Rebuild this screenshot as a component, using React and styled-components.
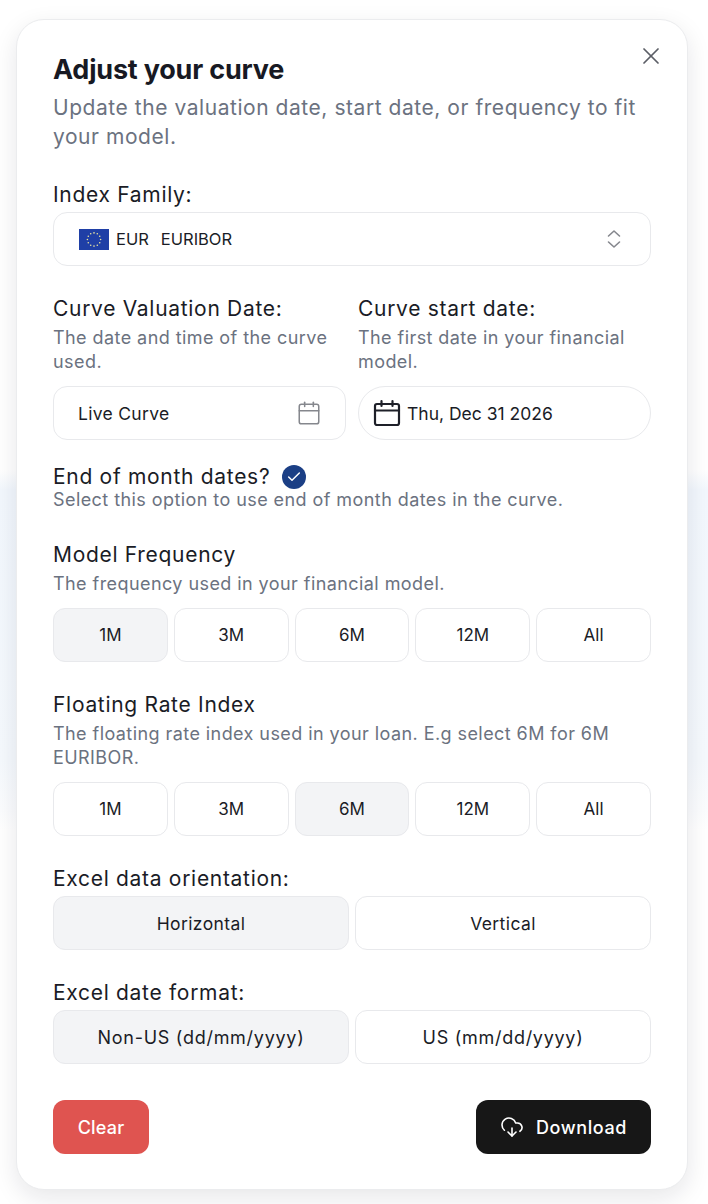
import React from "react";
import styled, { createGlobalStyle } from "styled-components";
import { X, Calendar, CloudDownload, Check } from "lucide-react";

const Global = createGlobalStyle`
  html, body { margin: 0; padding: 0; background: #fff; }
  * { box-sizing: border-box; }
  body { font-family: Inter, "Noto Sans", sans-serif; color: #1a1c26; }
`;
const Page = styled.div`
  width: 708px; height: 1204px; overflow: hidden; padding: 19px 20px 0 16px;
  background:
    linear-gradient(180deg, rgba(255,255,255,0) 0, rgba(255,255,255,0) 470px, #f2f7fd 490px, #f5f9fd 760px, #fbfcfe 810px, #fff 830px);
`;
const Card = styled.div`
  position: relative; width: 672px; padding: 34px 36px 35px;
  background: #fff; border: 1px solid #ebecee; border-radius: 28px;
  box-shadow: 0 8px 24px rgba(20, 24, 40, .1);
  display: flex; flex-direction: column;
`;
const Close = styled.button`
  position: absolute; top: 22px; right: 22px; width: 28px; height: 28px; padding: 0;
  border: 0; background: none; color: #5b5e66; display: flex;
`;
const Title = styled.h1`
  margin: 0; font-size: 27px; line-height: 32px; font-weight: 700; letter-spacing: -.2px; color: #171923;
`;
const Sub = styled.p`
  margin: 7px 0 0; font-size: 21px; line-height: 29px; color: #6b7280; letter-spacing: .55px;
`;
const Label = styled.div`
  margin-top: ${p => p.$mt ?? 31}px; font-size: 21px; line-height: 24px; color: #1a1c26; letter-spacing: .7px;
`;
const Desc = styled.div`
  margin-top: ${p => p.$mt ?? 5}px; font-size: 18px; line-height: ${p => p.$lh ?? 24}px; color: #6b7280; letter-spacing: .43px;
`;
const Select = styled.div`
  margin-top: 5px; height: 54px; display: flex; align-items: center; padding: 0 25px;
  border: 1px solid #e8e9ec; border-radius: 14px; font-size: 16.500px; color: #1a1c26;
`;
const FlagBox = styled.svg`
  width: 30px; height: 21px; margin-right: 7px; flex: none;
`;
const Code = styled.span`
  margin-right: 12px;
`;
const Chevrons = styled.svg`
  width: 18px; height: 22px; margin-left: auto; margin-right: 2px; color: #85878d;
`;
const Cols = styled.div`
  display: grid; grid-template-columns: 1fr 1fr; gap: 12px; margin-top: 31px;
`;
const Col = styled.div`
  display: flex; flex-direction: column;
`;
const DateField = styled.div`
  margin-top: 12px; height: 54px; display: flex; align-items: center;
  border: 1px solid #e8e9ec; border-radius: ${p => p.$round ? "27px" : "14px"};
  padding: 0 ${p => p.$round ? "14px" : "24px"}; font-size: 17.500px; color: #1a1c26;
  letter-spacing: ${p => p.$round ? 0 : .3}px;
  justify-content: ${p => p.$round ? "flex-start" : "space-between"};
  gap: 6px;
`;
const Cal = styled(Calendar)`
  color: #85878d; margin-right: -1px;
`;
const DarkCal = styled.svg`
  width: 28px; height: 28px; flex: none; color: #1e2029;
`;
const CheckRow = styled.div`
  margin-top: 25px; display: flex; align-items: center; gap: 12px;
  font-size: 21px; line-height: 24px; letter-spacing: .7px; color: #1a1c26;
`;
const CheckDot = styled.span`
  width: 24px; height: 24px; border-radius: 50%; background: #1b3f85; color: #fff;
  display: flex; align-items: center; justify-content: center;
`;
const Options = styled.div`
  margin-top: ${p => p.$mt ?? 12}px; display: grid; gap: 6px;
  grid-template-columns: repeat(${p => p.$cols}, 1fr);
`;
const Option = styled.div`
  height: 54px; display: flex; align-items: center; justify-content: center;
  border: 1px solid #e8e9ec; border-radius: 12px; color: #1a1c26;
  font-size: ${p => p.$size}px; letter-spacing: ${p => p.$ls}px;
  background: ${p => p.$on ? "#f3f4f6" : "#fff"};
`;
const Actions = styled.div`
  margin-top: 36px; display: flex; justify-content: space-between;
`;
const Clear = styled.button`
  width: 96px; height: 54px; border: 0; border-radius: 12px; background: #df5450; color: #fff;
  font: 500 18px Inter, sans-serif; letter-spacing: .2px;
`;
const Download = styled.button`
  width: 175px; height: 54px; border: 0; border-radius: 12px; background: #171717; color: #fff;
  font: 500 18px Inter, sans-serif; letter-spacing: .6px; display: flex; align-items: center; justify-content: center; gap: 12px;
`;

const stars = Array.from({ length: 12 }, (_, i) => {
  const a = (i / 12) * Math.PI * 2;
  return [15 + Math.cos(a) * 6.6, 10.5 + Math.sin(a) * 6.6];
});
const Flag = () => (
  <FlagBox viewBox="0 0 30 21">
    <rect width="30" height="21" fill="#1f3fa6" />
    {stars.map(([x, y], i) => <circle key={i} cx={x} cy={y} r=".8" fill="#e8e4a0" />)}
  </FlagBox>
);

const Group = ({ items, on, mt, size = 17, ls = 0 }) => (
  <Options $cols={items.length} $mt={mt}>
    {items.map(t => <Option key={t} $on={t === on} $size={size} $ls={ls}>{t}</Option>)}
  </Options>
);
const freq = ["1M", "3M", "6M", "12M", "All"];

export default function App() {
  return (
    <Page>
      <Global />
      <Card>
        <Close aria-label="Close"><X size={28} strokeWidth={1.5} /></Close>
        <Title>Adjust your curve</Title>
        <Sub>Update the valuation date, start date, or frequency to fit your model.</Sub>

        <Label $mt={32}>Index Family:</Label>
        <Select>
          <Flag />
          <Code>EUR</Code>
          <span>EURIBOR</span>
          <Chevrons viewBox="0 0 18 22" fill="none" stroke="currentColor" strokeWidth="1.6" strokeLinecap="round" strokeLinejoin="round">
            <path d="M3.500 8 9 3l5.500 5M3.500 14 9 19l5.500-5" />
          </Chevrons>
        </Select>

        <Cols>
          <Col>
            <Label $mt={0}>Curve Valuation Date:</Label>
            <Desc>The date and time of the curve used.</Desc>
            <DateField>
              Live Curve
              <Cal size={26} strokeWidth={1.4} />
            </DateField>
          </Col>
          <Col>
            <Label $mt={0}>Curve start date:</Label>
            <Desc>The first date in your financial model.</Desc>
            <DateField $round>
              <DarkCal viewBox="0 0 28 28" fill="none" stroke="currentColor" strokeWidth="2.2" strokeLinecap="round" strokeLinejoin="round">
                <rect x="2" y="5" width="24" height="21" rx="2" />
                <path d="M2 11.500h24M8.500 2v5M19.500 2v5" />
              </DarkCal>
              Thu, Dec 31 2026
            </DateField>
          </Col>
        </Cols>

        <CheckRow>
          End of month dates?
          <CheckDot><Check size={16} strokeWidth={2.2} /></CheckDot>
        </CheckRow>
        <Desc $mt={0} $lh={22}>Select this option to use end of month dates in the curve.</Desc>

        <Label $mt={32}>Model Frequency</Label>
        <Desc>The frequency used in your financial model.</Desc>
        <Group items={freq} on="1M" />

        <Label>Floating Rate Index</Label>
        <Desc>The floating rate index used in your loan. E.g select 6M for 6M EURIBOR.</Desc>
        <Group items={freq} on="6M" />

        <Label>Excel data orientation:</Label>
        <Group items={["Horizontal", "Vertical"]} on="Horizontal" mt={5} size={17.5} ls={.4} />

        <Label>Excel date format:</Label>
        <Group items={["Non-US (dd/mm/yyyy)", "US (mm/dd/yyyy)"]} on="Non-US (dd/mm/yyyy)" mt={5} size={18} ls={.72} />

        <Actions>
          <Clear>Clear</Clear>
          <Download><CloudDownload size={24} strokeWidth={1.6} />Download</Download>
        </Actions>
      </Card>
    </Page>
  );
}
